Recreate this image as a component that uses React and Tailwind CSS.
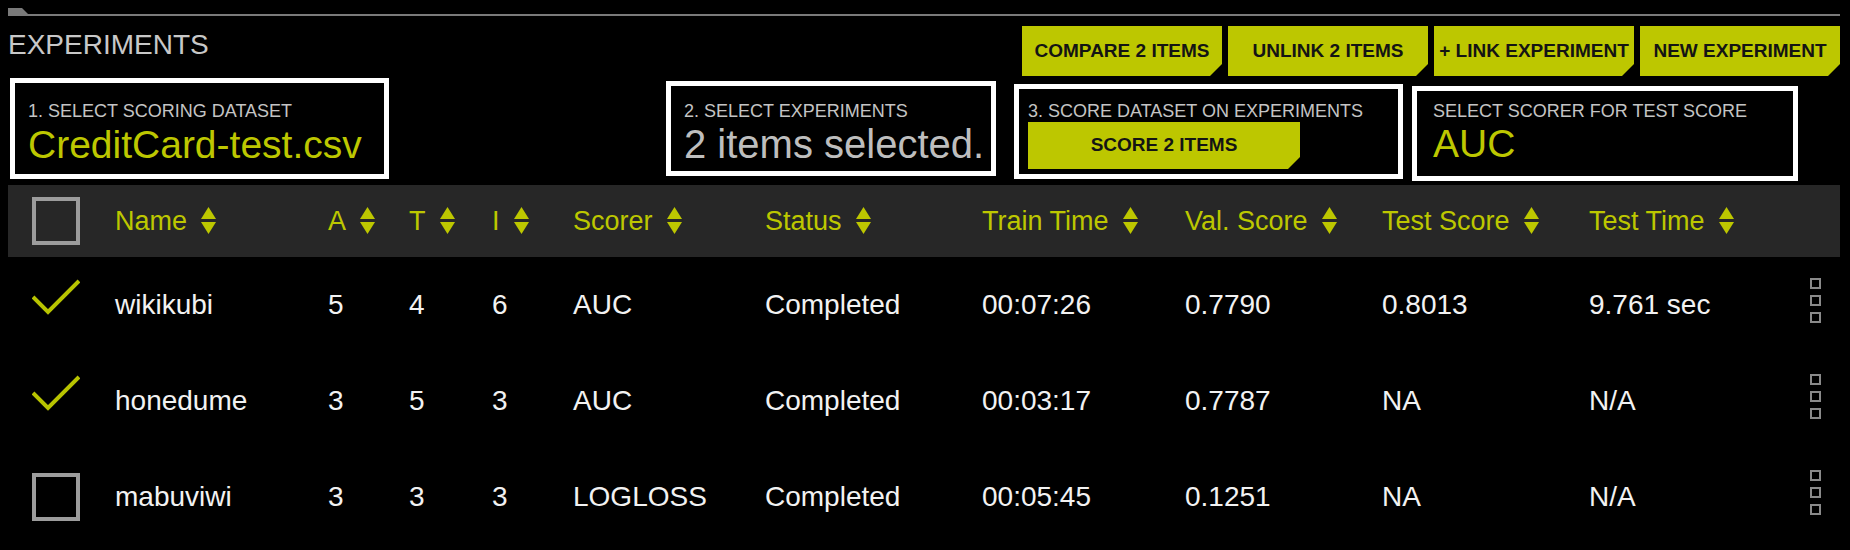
import React from "react";

const cut = "[clip-path:polygon(0_0,100%_0,100%_calc(100%-12px),calc(100%-12px)_100%,0_100%)]";

const rows = [
    { name: "wikikubi", a: 5, t: 4, i: 6, scorer: "AUC", status: "Completed", train: "00:07:26", val: "0.7790", test: "0.8013", time: "9.761 sec", checked: true },
    { name: "honedume", a: 3, t: 5, i: 3, scorer: "AUC", status: "Completed", train: "00:03:17", val: "0.7787", test: "NA", time: "N/A", checked: true },
    { name: "mabuviwi", a: 3, t: 3, i: 3, scorer: "LOGLOSS", status: "Completed", train: "00:05:45", val: "0.1251", test: "NA", time: "N/A", checked: false },
];

const headers = ["Name", "A", "T", "I", "Scorer", "Status", "Train Time", "Val. Score", "Test Score", "Test Time"];

const grid = "grid grid-cols-[83px_213px_81px_83px_81px_192px_217px_203px_197px_207px_221px_40px] items-center pl-[24px]";

function SortIcon() {
    return (
        <svg width="15" height="28" viewBox="0 0 15 28" className="ml-[14px] shrink-0">
            <polygon points="7.5,0 15,12 0,12" fill="#bdc700" />
            <polygon points="0,15 15,15 7.5,27" fill="#bdc700" />
        </svg>
    );
}

function ActionButton({ children, className = "" }) {
    return (
        <div className={`flex items-center justify-center bg-[#bdc700] text-[#141414] font-bold text-[19px] ${cut} ${className}`}>
            {children}
        </div>
    );
}

function Box({ label, className, children }) {
    return (
        <div className={`border-[5px] border-white bg-black h-[95px] ${className}`}>
            <div className="text-[18px] leading-[20px] text-[#c4c4c4] whitespace-nowrap">{label}</div>
            {children}
        </div>
    );
}

function Checkbox() {
    return <div className="w-[48px] h-[48px] border-[4px] border-[#9c9c9c]" />;
}

function Check() {
    return (
        <svg width="48" height="48" viewBox="0 0 48 48" className="mb-[8px]">
            <polyline points="1,20 16,35 47,4" fill="none" stroke="#b8c400" strokeWidth="4" />
        </svg>
    );
}

function Kebab() {
    return (
        <div className="flex flex-col gap-[6px] mb-[9px]">
            <div className="w-[11px] h-[11px] border-[2px] border-[#8a8a8a]" />
            <div className="w-[11px] h-[11px] border-[2px] border-[#8a8a8a]" />
            <div className="w-[11px] h-[11px] border-[2px] border-[#8a8a8a]" />
        </div>
    );
}

export default function App() {
    return (
        <div className="w-[1850px] h-[550px] overflow-hidden bg-black pl-[8px] pr-[10px] pt-[8px] font-['Liberation_Sans',Arial,sans-serif]">
            <div className="w-[20px] h-[6px] bg-[#7a7a7a] [clip-path:polygon(0_0,14px_0,100%_100%,0_100%)]" />
            <div className="h-[2px] bg-[#7a7a7a]" />

            <div className="flex items-start justify-between">
                <div className="mt-[13px] text-[28px] leading-[32px] text-[#c8c8c8]">EXPERIMENTS</div>
                <div className="mt-[10px] flex gap-[6px]">
                    <ActionButton className="w-[200px] h-[50px]">COMPARE 2 ITEMS</ActionButton>
                    <ActionButton className="w-[200px] h-[50px]">UNLINK 2 ITEMS</ActionButton>
                    <ActionButton className="w-[200px] h-[50px]">+ LINK EXPERIMENT</ActionButton>
                    <ActionButton className="w-[200px] h-[50px]">NEW EXPERIMENT</ActionButton>
                </div>
            </div>

            <div className="mt-[2px] flex items-start">
                <Box label="1. SELECT SCORING DATASET" className="ml-[2px] w-[379px] !h-[101px] pl-[13px] pt-[18px]">
                    <div className="mt-[2px] text-[39px] leading-[44px] text-[#bdc700] whitespace-nowrap">CreditCard-test.csv</div>
                </Box>
                <Box label="2. SELECT EXPERIMENTS" className="ml-[277px] mt-[3px] w-[330px] pl-[13px] pt-[15px]">
                    <div className="mt-[1px] text-[40px] leading-[44px] text-[#bebebe] whitespace-nowrap">2 items selected.</div>
                </Box>
                <Box label="3. SCORE DATASET ON EXPERIMENTS" className="ml-[18px] mt-[6px] w-[389px] pl-[9px] pt-[12px]">
                    <ActionButton className="mt-[1px] w-[272px] h-[47px]">SCORE 2 ITEMS</ActionButton>
                </Box>
                <Box label="SELECT SCORER FOR TEST SCORE" className="ml-[9px] mt-[8px] w-[386px] pl-[16px] pt-[10px]">
                    <div className="mt-[1px] text-[39px] leading-[44px] text-[#bdc700]">AUC</div>
                </Box>
            </div>

            <div className="mt-[4px]">
                <div className={`${grid} h-[72px] bg-[#272727]`}>
                    <Checkbox />
                    {headers.map((h) => (
                        <div key={h} className="flex items-center text-[27px] leading-[30px] text-[#bdc700] whitespace-nowrap">
                            {h}
                            <SortIcon />
                        </div>
                    ))}
                    <div />
                </div>
                {rows.map((r) => (
                    <div key={r.name} className={`${grid} h-[96px] text-[28px] leading-[32px] text-[#f2f2f2]`}>
                        {r.checked ? <Check /> : <Checkbox />}
                        <div>{r.name}</div>
                        <div>{r.a}</div>
                        <div>{r.t}</div>
                        <div>{r.i}</div>
                        <div>{r.scorer}</div>
                        <div>{r.status}</div>
                        <div>{r.train}</div>
                        <div>{r.val}</div>
                        <div>{r.test}</div>
                        <div className="whitespace-nowrap">{r.time}</div>
                        <Kebab />
                    </div>
                ))}
            </div>
        </div>
    );
}
